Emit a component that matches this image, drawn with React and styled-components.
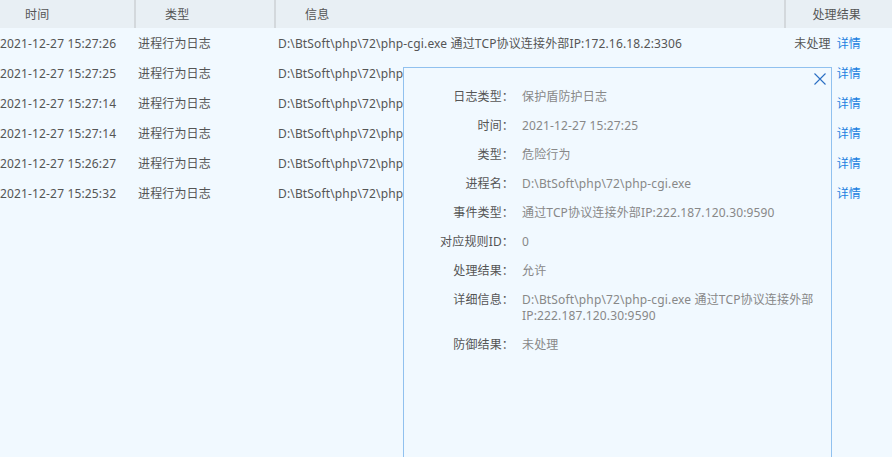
import React from "react";
import styled, { createGlobalStyle } from "styled-components";

const Global = createGlobalStyle`
  html, body { margin: 0; padding: 0; }
  body {
    width: 892px; height: 457px; overflow: hidden;
    background: #f1f9ff;
    font-family: "Noto Sans", "Noto Sans CJK SC", sans-serif;
    font-size: 12px; color: #555;
    letter-spacing: 0.15px;
  }
`;

const Page = styled.div`
  position: relative;
  width: 892px;
  height: 457px;
  overflow: hidden;
  background: #f1f9ff;
`;

const Table = styled.div`
  margin-left: -4px;
  width: 896px;
`;

const cols = "138px 140px 510px 1fr";

const HeaderRow = styled.div`
  display: grid;
  grid-template-columns: ${cols};
  height: 28px;
  background: #e8eff4;
`;

const HeadCell = styled.div`
  display: flex;
  align-items: center;
  justify-content: ${(p) => (p.$right ? "flex-end" : "flex-start")};
  padding: ${(p) => (p.$right ? "0 31px 0 0" : "0 0 0 29px")};
  border-left: ${(p) => (p.$first ? "none" : "2px solid #d3d8dc")};
  color: #555;
  white-space: nowrap;
`;

const Row = styled.div`
  display: grid;
  grid-template-columns: ${cols};
  height: 30px;
`;

const Cell = styled.div`
  display: flex;
  align-items: center;
  justify-content: ${(p) => (p.$right ? "flex-end" : "flex-start")};
  padding: ${(p) => (p.$right ? "0 31px 0 0" : "0 0 0 4px")};
  white-space: nowrap;
  overflow: hidden;
  color: #555;
`;

const Link = styled.span`
  color: #1b7ee0;
  margin-left: 6px;
  cursor: pointer;
`;

const Modal = styled.div`
  position: absolute;
  left: 403px;
  top: 67px;
  width: 429px;
  height: 420px;
  border: 1px solid #91c1ef;
  background: #f1f9ff;
  box-sizing: border-box;
  padding: 21px 0 0 0;
`;

const Close = styled.button`
  position: absolute;
  right: 4px;
  top: 4px;
  width: 14px;
  height: 14px;
  padding: 0;
  border: none;
  background: transparent;
  cursor: pointer;
  display: flex;
`;

const Field = styled.div`
  display: grid;
  grid-template-columns: 110px 1fr;
  column-gap: 8px;
  line-height: 16px;
  margin-bottom: 13px;
`;

const Label = styled.div`
  text-align: right;
  color: #555;
  white-space: nowrap;
`;

const Value = styled.div`
  color: #888;
  padding-right: 8px;
`;

const rows = [
  ["2021-12-27 15:27:26", "D:\\BtSoft\\php\\72\\php-cgi.exe 通过TCP协议连接外部IP:172.16.18.2:3306"],
  ["2021-12-27 15:27:25", "D:\\BtSoft\\php\\72\\php-cgi.exe 通过TCP协议连接外部IP:222.187.120.30:9590"],
  ["2021-12-27 15:27:14", "D:\\BtSoft\\php\\72\\php-cgi.exe 通过TCP协议连接外部IP:222.187.120.30:9590"],
  ["2021-12-27 15:27:14", "D:\\BtSoft\\php\\72\\php-cgi.exe 通过TCP协议连接外部IP:222.187.120.30:9590"],
  ["2021-12-27 15:26:27", "D:\\BtSoft\\php\\72\\php-cgi.exe 通过TCP协议连接外部IP:222.187.120.30:9590"],
  ["2021-12-27 15:25:32", "D:\\BtSoft\\php\\72\\php-cgi.exe 通过TCP协议连接外部IP:222.187.120.30:9590"],
];

const fields = [
  ["日志类型：", "保护盾防护日志"],
  ["时间：", "2021-12-27 15:27:25"],
  ["类型：", "危险行为"],
  ["进程名：", "D:\\BtSoft\\php\\72\\php-cgi.exe"],
  ["事件类型：", "通过TCP协议连接外部IP:222.187.120.30:9590"],
  ["对应规则ID：", "0"],
  ["处理结果：", "允许"],
  ["详细信息：", "D:\\BtSoft\\php\\72\\php-cgi.exe 通过TCP协议连接外部IP:222.187.120.30:9590"],
  ["防御结果：", "未处理"],
];

export default function App() {
  return (
    <Page>
      <Global />
      <Table>
        <HeaderRow>
          <HeadCell $first>时间</HeadCell>
          <HeadCell>类型</HeadCell>
          <HeadCell>信息</HeadCell>
          <HeadCell $right>处理结果</HeadCell>
        </HeaderRow>
        {rows.map(([t, info], i) => (
          <Row key={i}>
            <Cell>{t}</Cell>
            <Cell>进程行为日志</Cell>
            <Cell>{info}</Cell>
            <Cell $right>
              未处理<Link>详情</Link>
            </Cell>
          </Row>
        ))}
      </Table>
      <Modal>
        <Close aria-label="关闭">
          <svg width="14" height="14" viewBox="0 0 14 14">
            <path d="M1.5 1.5 L12.5 12.5 M12.5 1.5 L1.5 12.5" stroke="#2b6fc4" strokeWidth="1.1" fill="none" />
          </svg>
        </Close>
        {fields.map(([l, v], i) => (
          <Field key={i}>
            <Label>{l}</Label>
            <Value>{v}</Value>
          </Field>
        ))}
      </Modal>
    </Page>
  );
}
